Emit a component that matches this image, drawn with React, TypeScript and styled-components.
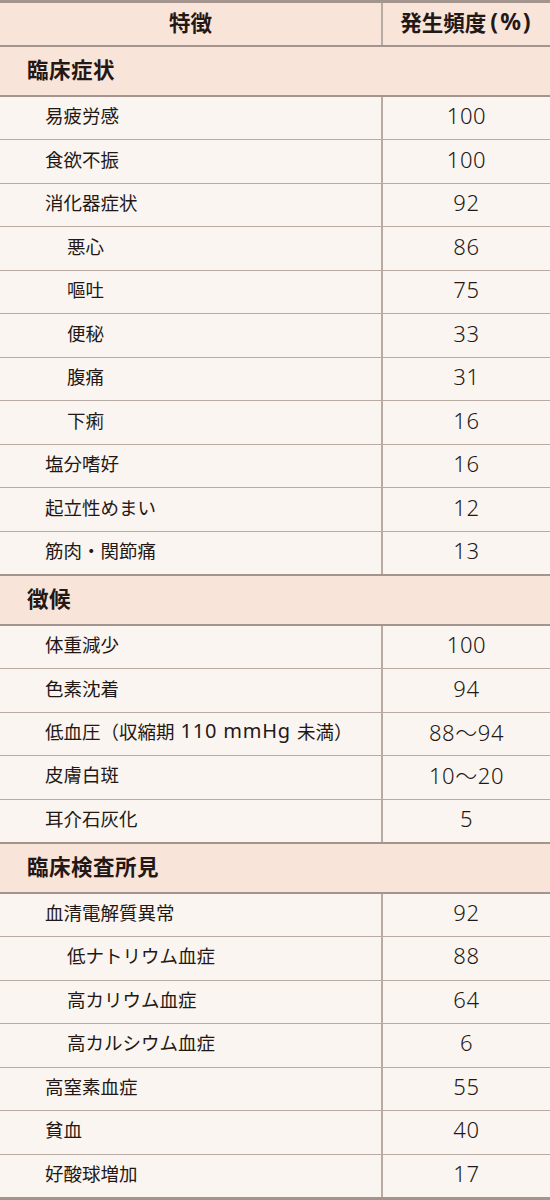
import React from "react";
import styled, { createGlobalStyle } from "styled-components";

const GlobalStyle = createGlobalStyle`
  html, body {
    margin: 0;
    padding: 0;
    background: #faf5f1;
  }
  body {
    font-family: "Noto Sans CJK JP", "Noto Sans", sans-serif;
    color: #231815;
  }
`;

type Item =
  | { kind: "section"; label: string }
  | { kind: "row"; label: string; value: string; level: 1 | 2 };

const items: Item[] = [
  { kind: "section", label: "臨床症状" },
  { kind: "row", label: "易疲労感", value: "100", level: 1 },
  { kind: "row", label: "食欲不振", value: "100", level: 1 },
  { kind: "row", label: "消化器症状", value: "92", level: 1 },
  { kind: "row", label: "悪心", value: "86", level: 2 },
  { kind: "row", label: "嘔吐", value: "75", level: 2 },
  { kind: "row", label: "便秘", value: "33", level: 2 },
  { kind: "row", label: "腹痛", value: "31", level: 2 },
  { kind: "row", label: "下痢", value: "16", level: 2 },
  { kind: "row", label: "塩分嗜好", value: "16", level: 1 },
  { kind: "row", label: "起立性めまい", value: "12", level: 1 },
  { kind: "row", label: "筋肉・関節痛", value: "13", level: 1 },
  { kind: "section", label: "徴候" },
  { kind: "row", label: "体重減少", value: "100", level: 1 },
  { kind: "row", label: "色素沈着", value: "94", level: 1 },
  { kind: "row", label: "低血圧（収縮期 110 mmHg 未満）", value: "88～94", level: 1 },
  { kind: "row", label: "皮膚白斑", value: "10～20", level: 1 },
  { kind: "row", label: "耳介石灰化", value: "5", level: 1 },
  { kind: "section", label: "臨床検査所見" },
  { kind: "row", label: "血清電解質異常", value: "92", level: 1 },
  { kind: "row", label: "低ナトリウム血症", value: "88", level: 2 },
  { kind: "row", label: "高カリウム血症", value: "64", level: 2 },
  { kind: "row", label: "高カルシウム血症", value: "6", level: 2 },
  { kind: "row", label: "高窒素血症", value: "55", level: 1 },
  { kind: "row", label: "貧血", value: "40", level: 1 },
  { kind: "row", label: "好酸球増加", value: "17", level: 1 },
];

const Table = styled.div`
  display: flex;
  flex-direction: column;
  width: 550px;
  height: 1200px;
  background: #faf5f1;
`;

const Row = styled.div<{ $head?: boolean; $bottom: number; $top?: number }>`
  flex: 1;
  box-sizing: border-box;
  display: grid;
  grid-template-columns: 381px 1fr;
  align-items: stretch;
  background: ${(p) => (p.$head ? "#f9e4da" : "#faf5f1")};
  border-top: ${(p) => (p.$top ? `${p.$top}px solid #a3958d` : "none")};
  border-bottom: ${(p) => p.$bottom}px solid
    ${(p) => (p.$bottom > 1 ? "#a3958d" : "#b8aba4")};
`;

const SectionRow = styled.div<{ $bottom: number }>`
  flex: 1;
  box-sizing: border-box;
  display: flex;
  align-items: center;
  padding: 0 0 5px 27px;
  background: #f9e4da;
  border-bottom: ${(p) => p.$bottom}px solid #a3958d;
  font-size: 21.5px;
  font-weight: 700;
  letter-spacing: 0.5px;
`;

const HeadCell = styled.div<{ $divider?: boolean }>`
  display: flex;
  align-items: center;
  justify-content: center;
  padding-bottom: 6px;
  font-size: 21.5px;
  font-weight: 700;
  border-left: ${(p) => (p.$divider ? "2px solid #b8aba4" : "none")};
`;

const LabelCell = styled.div<{ $level: 1 | 2 }>`
  display: flex;
  align-items: center;
  padding: 0 0 6px ${(p) => (p.$level === 2 ? 67 : 45)}px;
  font-size: 18.5px;
  white-space: pre;
`;

const Latin = styled.span<{ $size?: number; $spacing?: number; $lead?: number }>`
  font-family: "Noto Sans", "Liberation Sans", sans-serif;
  font-size: ${(p) => p.$size ?? 20}px;
  font-weight: inherit;
  letter-spacing: ${(p) => p.$spacing ?? 0.8}px;
  margin-left: ${(p) => p.$lead ?? 0}px;
`;

const ValueCell = styled.div`
  display: flex;
  align-items: center;
  justify-content: center;
  padding-bottom: 6px;
  border-left: 2px solid #b8aba4;
  font-family: "Noto Sans", "Noto Sans CJK JP", sans-serif;
  font-size: 22px;
  font-weight: 300;
  letter-spacing: 0.6px;
`;

// wrap runs of ASCII in a latin span so digits and units get the wider face
const withLatin = (text: string, size?: number, spacing?: number, lead?: number) =>
  text.split(/([\x20-\x7e]+)/).map((part, i) =>
    /^[\x20-\x7e]+$/.test(part) && part.trim() ? (
      <Latin key={i} $size={size} $spacing={spacing} $lead={lead}>
        {part}
      </Latin>
    ) : (
      part
    )
  );

export default function App() {
  return (
    <>
      <GlobalStyle />
      <Table>
        <Row $head $top={3} $bottom={2}>
          <HeadCell>特徴</HeadCell>
          <HeadCell $divider>発生頻度{withLatin("(%)", 23, 2, 4)}</HeadCell>
        </Row>
        {items.map((it, i) => {
          const next = items[i + 1];
          const isLast = i === items.length - 1;
          if (it.kind === "section") {
            return (
              <SectionRow key={i} $bottom={2}>
                {it.label}
              </SectionRow>
            );
          }
          const bottom = isLast ? 3 : next && next.kind === "section" ? 2 : 1;
          return (
            <Row key={i} $bottom={bottom}>
              <LabelCell $level={it.level}>{withLatin(it.label)}</LabelCell>
              <ValueCell>{it.value}</ValueCell>
            </Row>
          );
        })}
      </Table>
    </>
  );
}
